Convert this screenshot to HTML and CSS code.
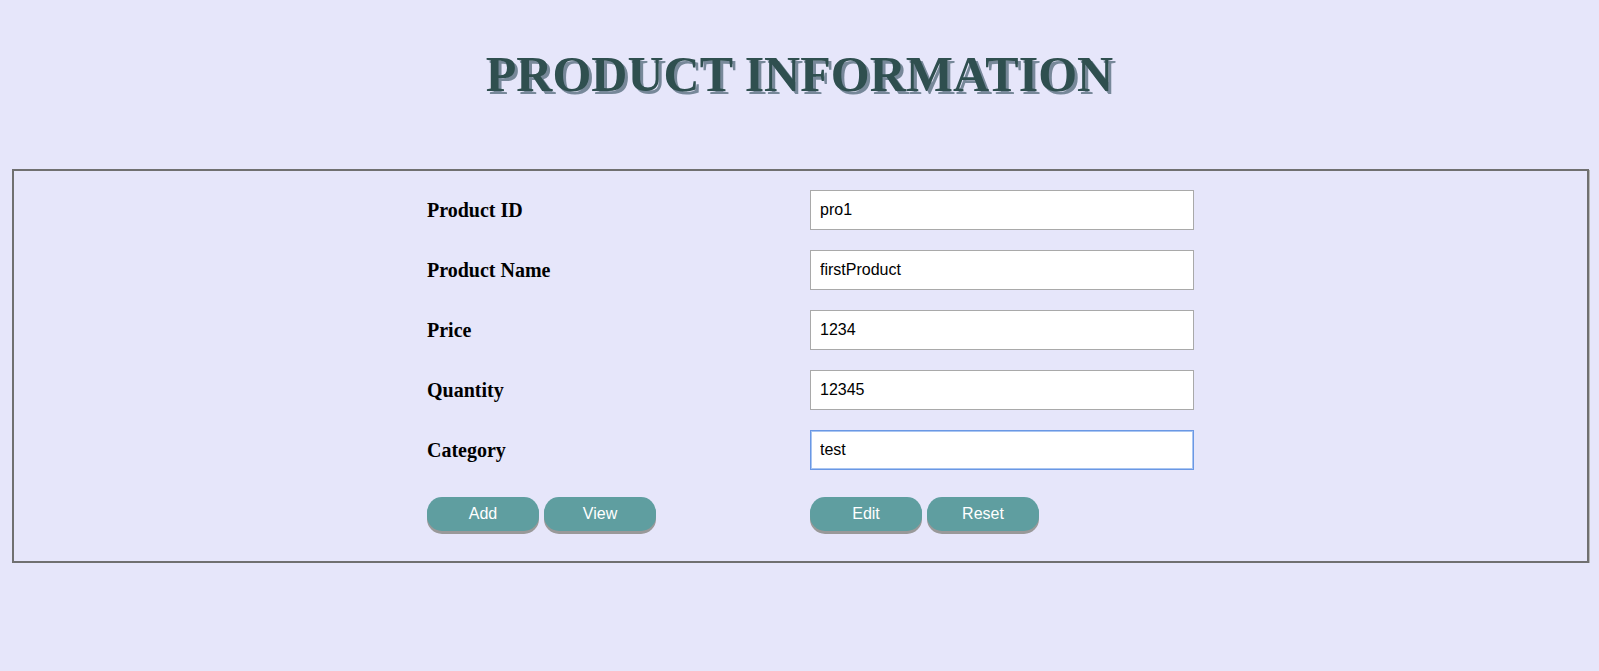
FILE: index.html
```html
<!DOCTYPE html>
<html>
<head>
<meta charset="utf-8">
<title>Product Information</title>
<link rel="stylesheet" href="styles.css">
</head>
<body>
<h1 class="title">PRODUCT INFORMATION</h1>
<form class="panel">
  <div class="grid">
    <label class="label" for="pid">Product ID</label>
    <input class="field" id="pid" type="text" value="pro1">
    <label class="label" for="pname">Product Name</label>
    <input class="field" id="pname" type="text" value="firstProduct">
    <label class="label" for="price">Price</label>
    <input class="field" id="price" type="text" value="1234">
    <label class="label" for="qty">Quantity</label>
    <input class="field" id="qty" type="text" value="12345">
    <label class="label" for="cat">Category</label>
    <input class="field focused" id="cat" type="text" value="test" autofocus>
    <div class="btns">
      <button type="button" class="btn">Add</button>
      <button type="button" class="btn">View</button>
    </div>
    <div class="btns">
      <button type="button" class="btn">Edit</button>
      <button type="button" class="btn">Reset</button>
    </div>
  </div>
</form>
</body>
</html>
```
FILE: styles.css
```css
html, body {
  background: #e6e6fa;
}
body {
  margin: 8px;
  font-family: "Liberation Serif", "Times New Roman", serif;
}
.title {
  margin: 38px 0 67px;
  text-align: center;
  font-family: "Liberation Serif", "Times New Roman", serif;
  font-weight: bold;
  font-size: 50px;
  line-height: 56px;
  color: #2f4f4f;
  text-shadow: 3px 3px 0 #778899;
}
.panel {
  margin: 0 2px 0 4px;
  border: 2px solid #707070;
  box-shadow: 1px 1px 0 #b8b8b8;
  padding: 19px 0 30px 20px;
}
.grid {
  display: grid;
  grid-template-columns: 383px 384px;
  row-gap: 20px;
  justify-content: center;
}
.label {
  display: flex;
  align-items: center;
  font-weight: bold;
  font-size: 20px;
  color: #000;
}
.field {
  box-sizing: border-box;
  width: 384px;
  height: 40px;
  margin: 0;
  padding: 0 9px;
  border: 1px solid #a9a9a9;
  background: #fff;
  font-family: "Liberation Sans", Arial, sans-serif;
  font-size: 16px;
  color: #000;
  outline: none;
}
.field.focused {
  border: 1px solid #6a98e4;
  box-shadow: inset 0 0 0 1px #a9c5f2;
}
.btns {
  display: flex;
  gap: 5px;
  margin-top: 7px;
}
.btn {
  width: 112px;
  height: 34px;
  margin: 0;
  padding: 0;
  border: none;
  border-radius: 15px;
  background: #5f9ea0;
  color: #fff;
  font-family: "Liberation Sans", Arial, sans-serif;
  font-size: 16px;
  box-shadow: 0 3px 0 #999;
  cursor: pointer;
}
```
